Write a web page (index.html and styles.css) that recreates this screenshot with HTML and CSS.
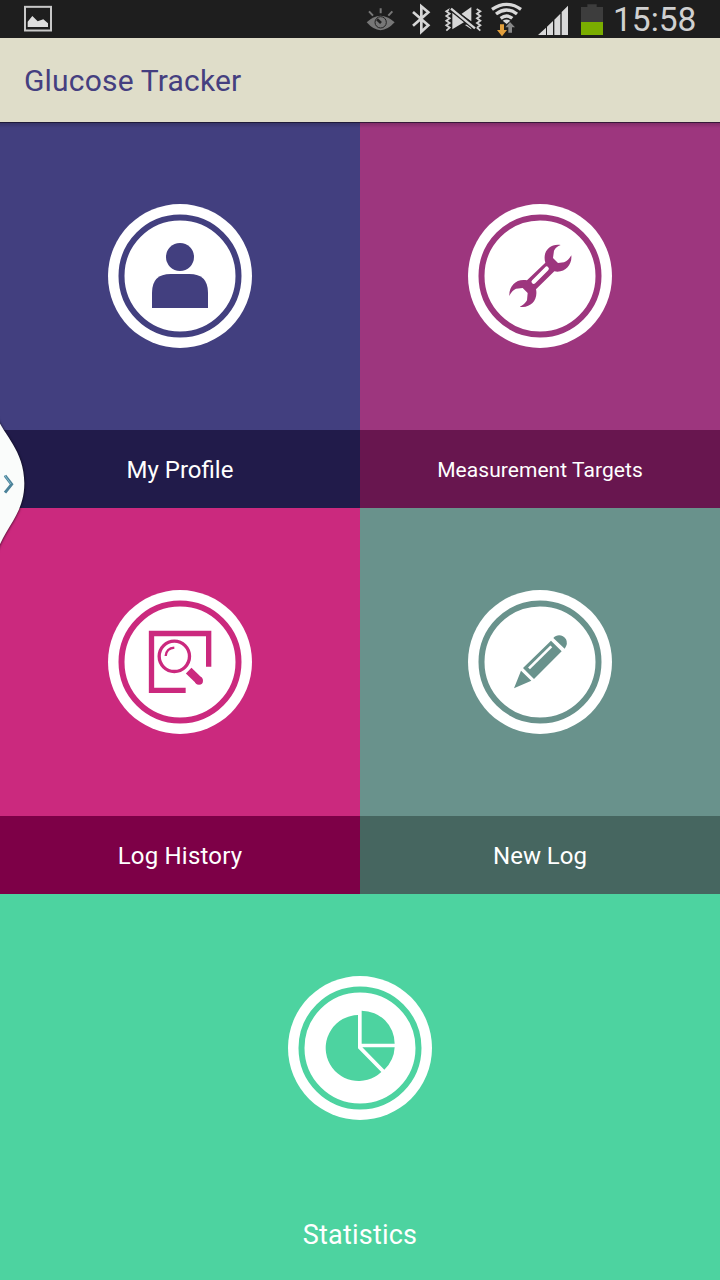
FILE: index.html
```
<!DOCTYPE html>
<html lang="en">
<head>
<meta charset="utf-8">
<title>Glucose Tracker</title>
<link rel="stylesheet" href="styles.css">
</head>
<body>
<div class="screen">
  <div class="status">
    <svg class="picture" viewBox="72 0 84 114"><rect x="75" y="20.500" width="78" height="71" fill="none" stroke="#c8c8c8" stroke-width="6"/><path d="M83 81V65L97 48L113 64L130 58L144 70V81Z" fill="#dedede"/></svg>
    <div class="indicators">
      <svg class="eye" viewBox="30 0 90 114"><path d="M35 67Q76 28 119 67Q76 114 35 67Z" fill="#777"/><circle cx="77" cy="67" r="17" fill="none" stroke="#222" stroke-width="3"/><path d="M78 69L66 58" stroke="#222" stroke-width="8"/><path d="M77 40V25M54 47L42 34M100 47L112 34" stroke="#777" stroke-width="6"/></svg>
      <svg class="bluetooth" viewBox="165 0 66 114"><path d="M174 36L220 76L199 95V19L220 37L174 77" fill="none" stroke="#d6d6d6" stroke-width="8"/></svg>
      <svg class="vibrate" viewBox="267 0 117 114"><path d="M285 27L274 34L284 41L274 48L284 55L274 62L284 69L274 76L284 83L274 92M365 27L376 34L366 41L376 48L366 55L376 62L366 69L376 76L366 83L376 92" fill="none" stroke="#d0d0d0" stroke-width="5.500"/><path d="M292 37L328 66L292 88ZM349 21V64L318 43ZM340 72L349 78V88L330 75Z" fill="#d6d6d6"/><path d="M286 24L362 86" stroke="#1e1e1e" stroke-width="15"/><path d="M288 26L360 85" stroke="#d6d6d6" stroke-width="7"/></svg>
      <svg class="wifi" viewBox="405 0 96 114"><g fill="none" stroke="#d9d9d9" stroke-width="10"><path d="M411 28Q455 -2 498 28"/><path d="M423 42Q455 18 486 42"/><path d="M437 55Q455 41 472 55"/></g><path d="M443 62Q455 55 466 62L455 72Z" fill="#d9d9d9"/><path d="M435 73H447V90H456L441 109L426 90H435Z" fill="#e3a03c"/><path d="M460 98V82H451L465 66L480 82H471V98Z" fill="#888"/></svg>
      <svg class="signal" viewBox="21 0 96 114"><path d="M24 105L48 83V105ZM51 105V80L69 63V105ZM73 105V59L91 41V105ZM95 105V36L114 17V105Z" fill="#d9d9d9"/></svg>
      <svg class="battery" viewBox="150 0 72 114"><path d="M153 21H172V13H200V21H219V66H153Z" fill="#3d3d3d"/><path d="M153 66H219V105H153Z" fill="#7aad00"/></svg>
      <span class="clock">15:58</span>
    </div>
  </div>
  <header class="header"><h1 class="title">Glucose Tracker</h1></header>
  <main class="tiles">
    <section class="tile profile">
      <div class="face"><svg class="badge" viewBox="24 24 432 432"><circle class="disc" cx="240" cy="240" r="216"/><circle class="ring" cx="240" cy="240" r="175.500"/><circle class="ink" cx="240" cy="183" r="42"/><path class="ink" d="M156 336V290Q156 234 212 234H268Q324 234 324 290V336Z"/></svg></div>
      <div class="label"><span>My Profile</span></div>
    </section>
    <section class="tile targets">
      <div class="face"><svg class="badge" viewBox="24 24 432 432"><circle class="disc" cx="240" cy="240" r="216"/><circle class="ring" cx="240" cy="240" r="175.500"/><path class="ink" d="M302 147C271 142 246 166 256 200L201 253C171 247 147 267 148 300Q155 284 168 278L188 276L203 291L201 313Q194 326 179 332C211 338 235 312 228 280L283 226C315 232 337 207 334 178Q325 194 312 199L294 201L279 186L282 164Q288 152 302 147Z"/><path d="M221 257L260 218" fill="none" stroke="#fff" stroke-width="13" stroke-linecap="round"/></svg></div>
      <div class="label"><span>Measurement Targets</span></div>
    </section>
    <section class="tile history">
      <div class="face"><svg class="badge" viewBox="24 24 432 432"><circle class="disc" cx="240" cy="240" r="216"/><circle class="ring" cx="240" cy="240" r="175.500"/><path class="line" d="M257 325H154.500V154.500H326V254" stroke-width="16"/><circle class="line" cx="223" cy="223" r="45.500" stroke-width="10"/><path class="line" d="M197 222Q199 199 223 197" stroke-width="7"/><path class="line" d="M266 266L297 296" stroke-width="24"/><circle class="ink" cx="297" cy="296" r="12"/></svg></div>
      <div class="label"><span>Log History</span></div>
    </section>
    <section class="tile new-log">
      <div class="face"><svg class="badge" viewBox="24 24 432 432"><circle class="disc" cx="240" cy="240" r="216"/><circle class="ring" cx="240" cy="240" r="175.500"/><path class="ink" d="M162 319L183 266L214 296ZM189 258L273 176L305 208L222 291ZM280 168C290 156 309 157 318 172Q325 185 314 200Z"/><path d="M207 259L274 193" fill="none" stroke="#fff" stroke-width="8"/></svg></div>
      <div class="label"><span>New Log</span></div>
    </section>
    <section class="tile statistics">
      <div class="face"><svg class="badge" viewBox="24 24 432 432"><circle class="disc" cx="240" cy="240" r="216"/><circle class="ring" cx="240" cy="240" r="175.500"/><path class="ink" d="M234 141A99 99 0 1 0 304 312L234 241ZM245 128A99 99 0 0 1 344 227H245ZM247 238H344Q342 278 313 305Z"/></svg></div>
      <div class="label"><span>Statistics</span></div>
    </section>
  </main>
  <svg class="handle" viewBox="0 0 90 450"><path class="handle-body" d="M-9 20C10 75 73 120 73 220C73 310 20 345 -9 425Z"/><path d="M15 197L35 223L15 248" fill="none" stroke="#4b8299" stroke-width="9"/><path d="M14 196L33 222" fill="none" stroke="#82b9cb" stroke-width="3"/></svg>
</div>
</body>
</html>
```
FILE: styles.css
```
body { margin: 0; font-family: Roboto, sans-serif; }
.screen { position: relative; width: 720px; height: 1280px; overflow: hidden; display: flex; flex-direction: column; }
.status { height: 38px; box-sizing: border-box; padding: 0 24px; display: flex; justify-content: space-between; background: #1e1e1e; }
.status svg { height: 38px; display: block; flex: none; }
.indicators { display: flex; }
.picture { width: 28px; }
.eye { width: 30px; margin-right: 15px; }
.bluetooth { width: 22px; margin-right: 12px; }
.vibrate { width: 39px; margin-right: 7px; }
.wifi { width: 32px; margin-right: 15px; }
.signal { width: 32px; margin-right: 11px; }
.battery { width: 24px; margin-right: 9px; }
.clock { width: 83px; font-size: 33.500px; line-height: 40px; color: #d0d0d0; white-space: nowrap; }
.header { height: 84px; box-sizing: border-box; padding: 2px 0 0 24px; display: flex; align-items: center; background: #dfddc9; }
.title { margin: 0; font-size: 30px; font-weight: 400; line-height: 36px; letter-spacing: .18px; color: #453f80; }
.tiles { flex: 1; display: grid; grid-template-columns: 360px 360px; grid-template-rows: repeat(3, 386px); }
.tile { display: flex; flex-direction: column; background: var(--tone); }
.profile, .targets { background: linear-gradient(rgba(20, 15, 35, .75) 1px, rgba(0, 0, 0, .18) 1px, transparent 6px), var(--tone); }
.face { height: 308px; display: flex; align-items: center; justify-content: center; }
.badge { width: 144px; height: 144px; display: block; }
.disc { fill: #fff; }
.ring { fill: none; stroke: var(--tone); stroke-width: 18; }
.ink { fill: var(--tone); }
.line { fill: none; stroke: var(--tone); }
.label { height: 78px; box-sizing: border-box; padding-top: 2px; display: flex; align-items: center; justify-content: center; font-size: 24px; line-height: 30px; color: #fff; background: var(--label); }
.profile { --tone: #423f7f; --label: #211b4a; }
.targets { --tone: #9d367e; --label: #68164f; }
.targets .label { font-size: 21px; letter-spacing: .06px; }
.history { --tone: #cb297e; --label: #7d0047; }
.history .label { letter-spacing: .2px; }
.new-log { --tone: #69928c; --label: #466660; }
.statistics { --tone: #4dd3a0; --label: transparent; grid-column: 1 / 3; }
.statistics .label { height: 66px; padding-top: 0; font-size: 27px; letter-spacing: .2px; }
.handle { position: absolute; left: 0; top: 410px; width: 30px; height: 150px; }
.handle-body { fill: #fafcfb; filter: drop-shadow(1px 1px 3px rgba(0, 0, 0, .7)); }
```
